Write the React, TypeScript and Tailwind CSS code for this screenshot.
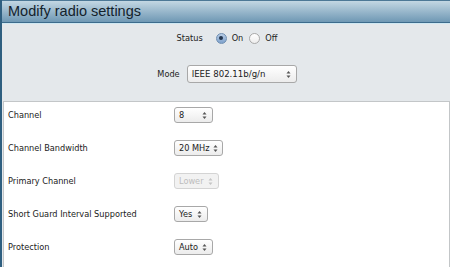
import React from "react";

// Modify radio settings panel

function Spinner({ disabled }: { disabled?: boolean }) {
  const c = disabled ? "#c4c4c4" : "#555";
  return (
    <svg width="5" height="9" viewBox="0 0 5 9" className="shrink-0">
      <path d="M2.5 1 L4.5 3.5 L0.5 3.5 Z" fill={c} />
      <path d="M2.5 8 L4.5 5.5 L0.5 5.5 Z" fill={c} />
    </svg>
  );
}

function Select({
  value,
  width,
  disabled,
  tall,
}: {
  value: string;
  width: string;
  disabled?: boolean;
  tall?: boolean;
}) {
  return (
    <div
      className={`flex items-center justify-between gap-[3px] rounded-[3px] border pl-[4px] pr-[5px] ${width} ${
        tall ? "h-[18px] text-[8.6px]" : "h-[16px] text-[8.2px]"
      } ${
        disabled
          ? "border-[#d4d4d4] bg-[#f2f2f2] text-[#bdbdbd]"
          : "border-[#a8a8a8] bg-gradient-to-b from-white to-[#ececec] text-[#222]"
      }`}
    >
      <span className="whitespace-nowrap">{value}</span>
      <Spinner disabled={disabled} />
    </div>
  );
}

function Radio({ checked }: { checked?: boolean }) {
  return checked ? (
    <span className="flex h-[11px] w-[11px] items-center justify-center rounded-full border border-[#6f8fb2] bg-gradient-to-b from-[#b9cde6] to-[#7ea2cc]">
      <span className="h-[4px] w-[4px] rounded-full bg-[#23364f]" />
    </span>
  ) : (
    <span className="h-[11px] w-[11px] rounded-full border border-[#a9a9a9] bg-gradient-to-b from-white to-[#ededed]" />
  );
}

const rows = [
  { label: "Channel", value: "8", width: "w-[39px]" },
  { label: "Channel Bandwidth", value: "20 MHz", width: "w-[49px]" },
  { label: "Primary Channel", value: "Lower", width: "w-[45px]", disabled: true },
  { label: "Short Guard Interval Supported", value: "Yes", width: "w-[34px]" },
  { label: "Protection", value: "Auto", width: "w-[39px]" },
];

export default function App() {
  return (
    <div
      className="flex h-[267px] w-[450px] flex-col overflow-hidden border-l-2 border-[#2f5f80] bg-[#e4e8eb] text-[#222]"
      style={{ fontFamily: "'DejaVu Sans', Verdana, sans-serif" }}
    >
      {/* Title bar */}
      <div className="flex h-[24px] shrink-0 flex-col">
        <div className="flex h-[22px] items-center border-t border-[#4d7896] bg-gradient-to-b from-[#c3d7e3] to-[#6f98b4] pl-[6px]">
          <span className="font-['Liberation_Sans',Arial,sans-serif] text-[14.5px] leading-none text-[#13222c]">
            Modify radio settings
          </span>
        </div>
        <div className="h-[1px] bg-[#3c6b8c]" />
        <div className="h-[1px] bg-[#cfe8f2]" />
      </div>

      {/* Status + mode */}
      <div className="flex h-[77px] shrink-0 flex-col items-center text-[8.2px]">
        <div className="mt-[7px] ml-[2px] flex h-[14px] items-center">
          <span className="mr-[13px]">Status</span>
          <Radio checked />
          <span className="ml-[5px] mr-[6px]">On</span>
          <Radio />
          <span className="ml-[5px]">Off</span>
        </div>
        <div className="mt-[20px] ml-[2px] flex items-center">
          <span className="mr-[7px]">Mode</span>
          <Select value="IEEE 802.11b/g/n" width="w-[110px]" tall />
        </div>
      </div>

      {/* Radio fields */}
      <div className="ml-[1px] flex-1 border-x border-t border-[#c3c6c8] bg-white pt-[5px] text-[8.2px]">
        {rows.map((r) => (
          <div key={r.label} className="mb-[17px] flex h-[16px] items-center pl-[4px]">
            <span className="w-[166px]">{r.label}</span>
            <Select value={r.value} width={r.width} disabled={r.disabled} />
          </div>
        ))}
      </div>
    </div>
  );
}
